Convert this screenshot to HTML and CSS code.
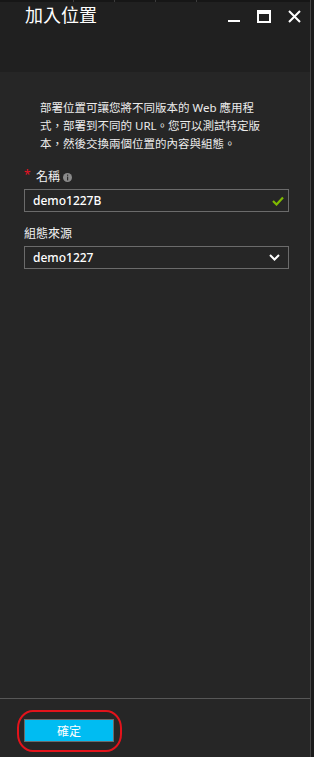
FILE: index.html
```html
<!DOCTYPE html>
<html>

	<head>
		<meta charset="UTF-8">
		<title>加入位置</title>
		<link rel="stylesheet" href="styles.css">
	</head>

	<body>

		<div class="page">
			<div class="blade">
				<div class="strip">
					<span class="tick"></span>
					<span class="tick"></span>
					<span class="tick"></span>
					<span class="tick"></span>
				</div>

				<div class="header">
					<h1 class="title">加入位置</h1>
					<div class="controls">
						<svg class="ctl" width="16" height="16" viewBox="0 0 16 16">
							<rect x="2" y="10" width="12" height="2" fill="#fff" />
						</svg>
						<svg class="ctl" width="16" height="16" viewBox="0 0 16 16">
							<rect x="2" y="1" width="12" height="11" fill="none" stroke="#fff" stroke-width="2" />
							<rect x="1" y="0" width="14" height="4" fill="#fff" />
						</svg>
						<svg class="ctl" width="16" height="16" viewBox="0 0 16 16">
							<path d="M3 1 L14 12 M14 1 L3 12" stroke="#fff" stroke-width="2" fill="none" />
						</svg>
					</div>
				</div>

				<div class="content">
					<p class="desc">部署位置可讓您將不同版本的 Web 應用程<br>式，部署到不同的 URL。您可以測試特定版<br>本，然後交換兩個位置的內容與組態。</p>

					<div class="field">
						<label class="label"><span class="req">*</span>名稱<svg class="info" width="9" height="9" viewBox="0 0 9 9">
								<circle cx="4.5" cy="4.5" r="4.5" fill="#8a8a8a" />
								<rect x="4" y="1.6" width="1.2" height="1.2" fill="#2a2a2a" />
								<rect x="4" y="3.6" width="1.2" height="3.8" fill="#2a2a2a" />
							</svg></label>
						<div class="box">
							<span class="value">demo1227B</span>
							<svg class="check" width="12" height="10" viewBox="0 0 12 10">
								<path d="M1 5 L4.5 8.5 L11 1.5" stroke="#7fba00" stroke-width="2.2" fill="none" />
							</svg>
						</div>
					</div>

					<div class="field">
						<label class="label">組態來源</label>
						<div class="box">
							<span class="value">demo1227</span>
							<svg class="chev" width="11" height="7" viewBox="0 0 11 7">
								<path d="M1 1 L5.5 5.5 L10 1" stroke="#fff" stroke-width="2" fill="none" />
							</svg>
						</div>
					</div>
				</div>

				<div class="footer">
					<div class="btn-wrap">
						<button class="btn">確定</button>
						<div class="mark"></div>
					</div>
				</div>
			</div>
			<div class="edge"></div>
		</div>

	</body>

</html>
```
FILE: styles.css
```css
html,
body {
	margin: 0;
	padding: 0;
	background-color: #1b1b1b;
}

body {
	font-family: "Noto Sans", "Noto Sans CJK TC", sans-serif;
	color: #fff;
}

.page {
	display: flex;
	width: 314px;
	height: 757px;
}

.blade {
	width: 310px;
	display: flex;
	flex-direction: column;
	background-color: #262626;
	border-right: 1px solid #444;
}

.edge {
	flex: 1;
	background-color: #1b1b1b;
}

/* strip of neighbouring blades */
.strip {
	height: 2px;
	background-color: #161616;
	display: flex;
	padding-left: 73px;
	gap: 40px;
}

.tick {
	width: 1px;
	height: 2px;
	background-color: #3c3c3c;
}

.header {
	height: 70px;
	background-color: #202020;
	display: flex;
	justify-content: space-between;
	align-items: flex-start;
	padding: 0 8px 0 25px;
}

.title {
	margin: 0;
	padding-top: 1px;
	font-size: 18px;
	font-weight: normal;
	line-height: 24px;
	color: #fff;
}

.controls {
	display: flex;
	gap: 14px;
	padding-top: 8px;
}

.ctl {
	display: block;
}

.content {
	flex: 1;
	padding: 27px 21px 0 24px;
}

.desc {
	margin: 0 0 15px 16px;
	font-size: 11.5px;
	line-height: 18px;
	color: #ececec;
}

.field {
	margin-bottom: 13px;
}

.label {
	display: flex;
	align-items: center;
	font-size: 12px;
	line-height: 18px;
	margin-bottom: 3px;
	color: #f2f2f2;
}

.req {
	color: #e81123;
	font-size: 12px;
	width: 12px;
	position: relative;
	top: -2px;
}

.info {
	margin-left: 3px;
	margin-top: 1px;
}

.box {
	height: 21px;
	border: 1px solid #6b6b6b;
	display: flex;
	align-items: center;
	justify-content: space-between;
	padding: 0 8px 0 8px;
}

.value {
	font-size: 12px;
	color: #fff;
	font-weight: 500;
}

.check {
	margin-right: -4px;
}

.footer {
	height: 59px;
	border-top: 1px solid #575757;
	padding: 20px 0 0 24px;
	box-sizing: border-box;
}

.btn-wrap {
	position: relative;
	width: 90px;
}

.btn {
	display: block;
	width: 90px;
	height: 23px;
	padding: 0;
	border: 1px solid #6b6b6b;
	background-color: #00bcf2;
	color: #fff;
	font-family: "Noto Sans", "Noto Sans CJK TC", sans-serif;
	font-size: 12px;
}

/* red annotation around the button */
.mark {
	position: absolute;
	left: -7px;
	top: -9px;
	width: 101px;
	height: 38px;
	border: 2px solid #e3131b;
	border-radius: 16px / 18px;
}
```
